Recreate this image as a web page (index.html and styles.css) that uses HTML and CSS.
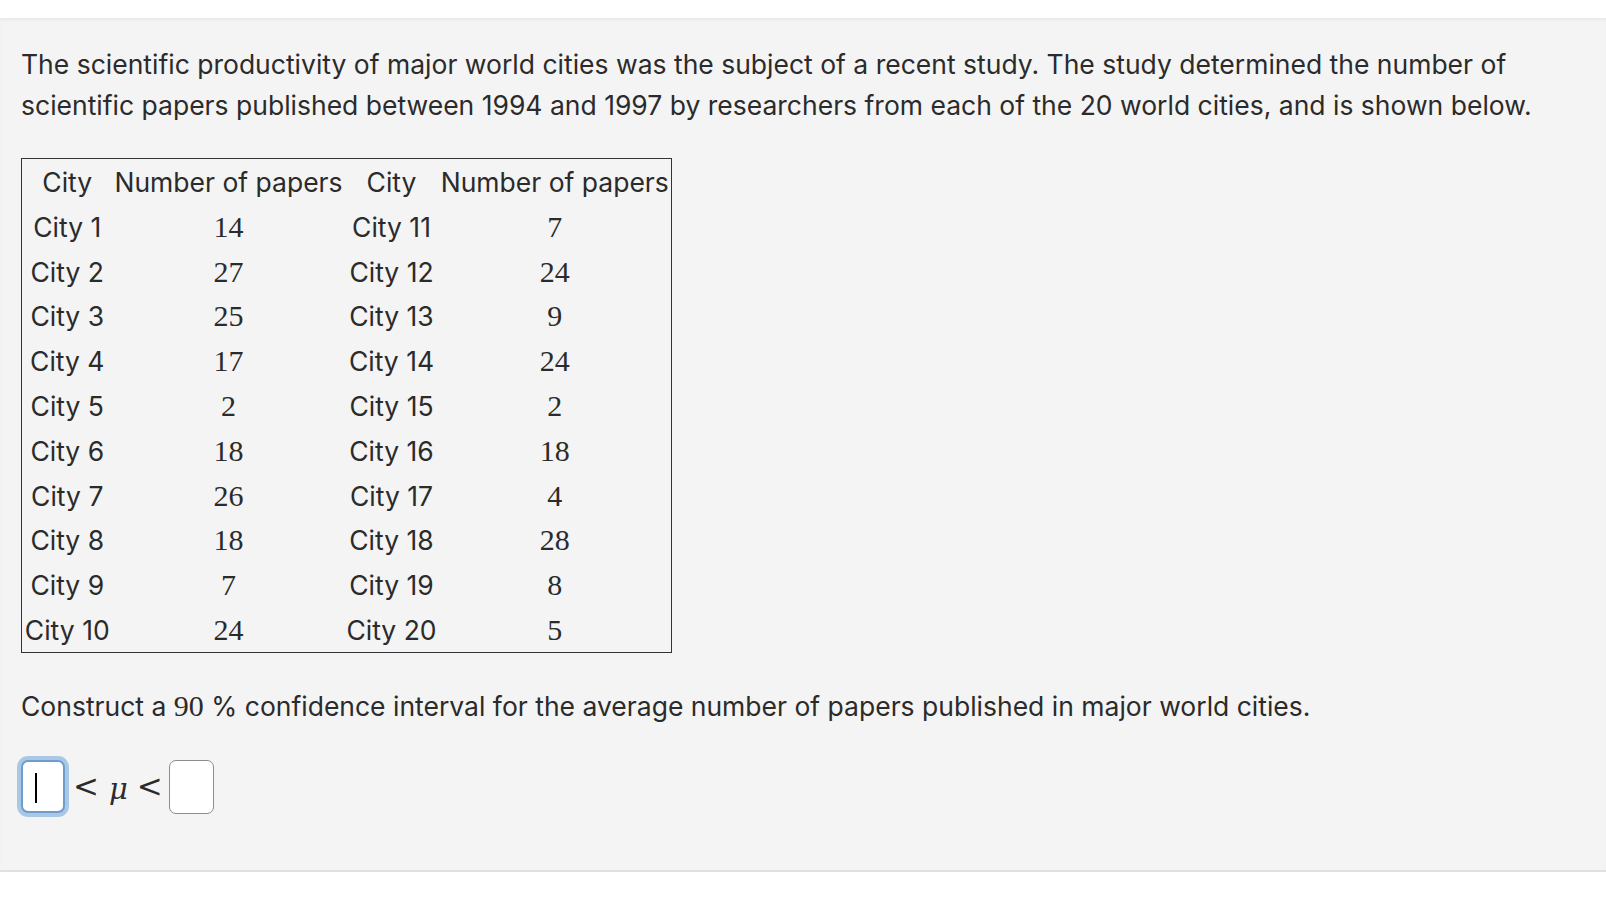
FILE: index.html
```html
<!DOCTYPE html>
<html lang="en">
<head>
<meta charset="utf-8">
<title>Confidence interval question</title>
<link rel="stylesheet" href="styles.css">
</head>
<body>
<div class="topbar"></div>
<main class="panel">
  <p class="intro">The scientific productivity of major world cities was the subject of a recent study. The study determined the number of scientific papers published between 1994 and 1997 by researchers from each of the 20 world cities, and is shown below.</p>
  <table class="data">
    <colgroup>
      <col class="c1"><col class="c2"><col class="c3"><col class="c4">
    </colgroup>
    <thead>
      <tr><th>City</th><th>Number of papers</th><th>City</th><th>Number of papers</th></tr>
    </thead>
    <tbody>
      <tr><td>City 1</td><td class="num">14</td><td>City 11</td><td class="num">7</td></tr>
      <tr><td>City 2</td><td class="num">27</td><td>City 12</td><td class="num">24</td></tr>
      <tr><td>City 3</td><td class="num">25</td><td>City 13</td><td class="num">9</td></tr>
      <tr><td>City 4</td><td class="num">17</td><td>City 14</td><td class="num">24</td></tr>
      <tr><td>City 5</td><td class="num">2</td><td>City 15</td><td class="num">2</td></tr>
      <tr><td>City 6</td><td class="num">18</td><td>City 16</td><td class="num">18</td></tr>
      <tr><td>City 7</td><td class="num">26</td><td>City 17</td><td class="num">4</td></tr>
      <tr><td>City 8</td><td class="num">18</td><td>City 18</td><td class="num">28</td></tr>
      <tr><td>City 9</td><td class="num">7</td><td>City 19</td><td class="num">8</td></tr>
      <tr><td>City 10</td><td class="num">24</td><td>City 20</td><td class="num">5</td></tr>
    </tbody>
  </table>
  <p class="question">Construct a <span class="math">90</span> % confidence interval for the average number of papers published in major world cities.</p>
  <div class="answer">
    <div class="box focused"><span class="caret"></span></div>
    <span class="rel rel-first">&lt;</span>
    <span class="mu">μ</span>
    <span class="rel">&lt;</span>
    <div class="box"></div>
  </div>
</main>
</body>
</html>
```
FILE: styles.css
```css
html, body {
  margin: 0;
  padding: 0;
  background: #ffffff;
}
body {
  font-family: "Inter", "Liberation Sans", sans-serif;
  color: #2b2b2b;
}
.topbar {
  height: 18px;
  background: #ffffff;
}
.panel {
  box-sizing: border-box;
  height: 854px;
  background: #f4f4f4;
  border-top: 1px solid #e9e9e9;
  border-bottom: 2px solid #e0e0e0;
  box-shadow: inset 0 2px 2px rgba(0,0,0,0.03);
  padding: 25px 20px 0 21px;
}
.intro {
  margin: 0;
  font-size: 26.5px;
  line-height: 41px;
  max-width: 1560px;
}
.data {
  margin-top: 32px;
  border-collapse: collapse;
  border: 1.5px solid #333;
  table-layout: fixed;
  width: 650px;
  font-size: 26.5px;
}
.c1 { width: 91px; }
.c2 { width: 232px; }
.c3 { width: 94px; }
.c4 { width: 233px; }
.data th, .data td {
  padding: 0;
  text-align: center;
  font-weight: normal;
  white-space: nowrap;
}
.data thead tr { height: 46px; }
.data tbody tr { height: 44.8px; }
.data .num {
  font-family: "Liberation Serif", "DejaVu Serif", serif;
  font-size: 30px;
}
.question {
  margin: 32px 0 0 0;
  font-size: 26.5px;
  line-height: 41px;
}
.math {
  font-family: "Liberation Serif", "DejaVu Serif", serif;
  font-size: 30px;
}
.answer {
  margin-top: 33px;
  display: flex;
  align-items: center;
  height: 54px;
}
.box {
  box-sizing: border-box;
  width: 45px;
  height: 54px;
  background: #ffffff;
  border: 1.5px solid #8c8c8c;
  border-radius: 7px;
  position: relative;
}
.box.focused {
  width: 44px;
  height: 53px;
  border: 2px solid #6f9ccc;
  box-shadow: 0 0 0 4px #a9c8e6;
}
.caret {
  position: absolute;
  left: 12px;
  top: 11px;
  width: 2px;
  height: 30px;
  background: #000;
}
.rel {
  font-family: "DejaVu Serif", "Liberation Serif", serif;
  font-size: 31px;
  line-height: 1;
  margin: 0 6px 0 5px;
}
.rel-first { margin-left: 8px; }
.mu {
  font-family: "DejaVu Serif", "Liberation Serif", serif;
  font-style: italic;
  font-size: 29px;
  line-height: 1;
  margin: 6px 4px 0 4px;
}
```
